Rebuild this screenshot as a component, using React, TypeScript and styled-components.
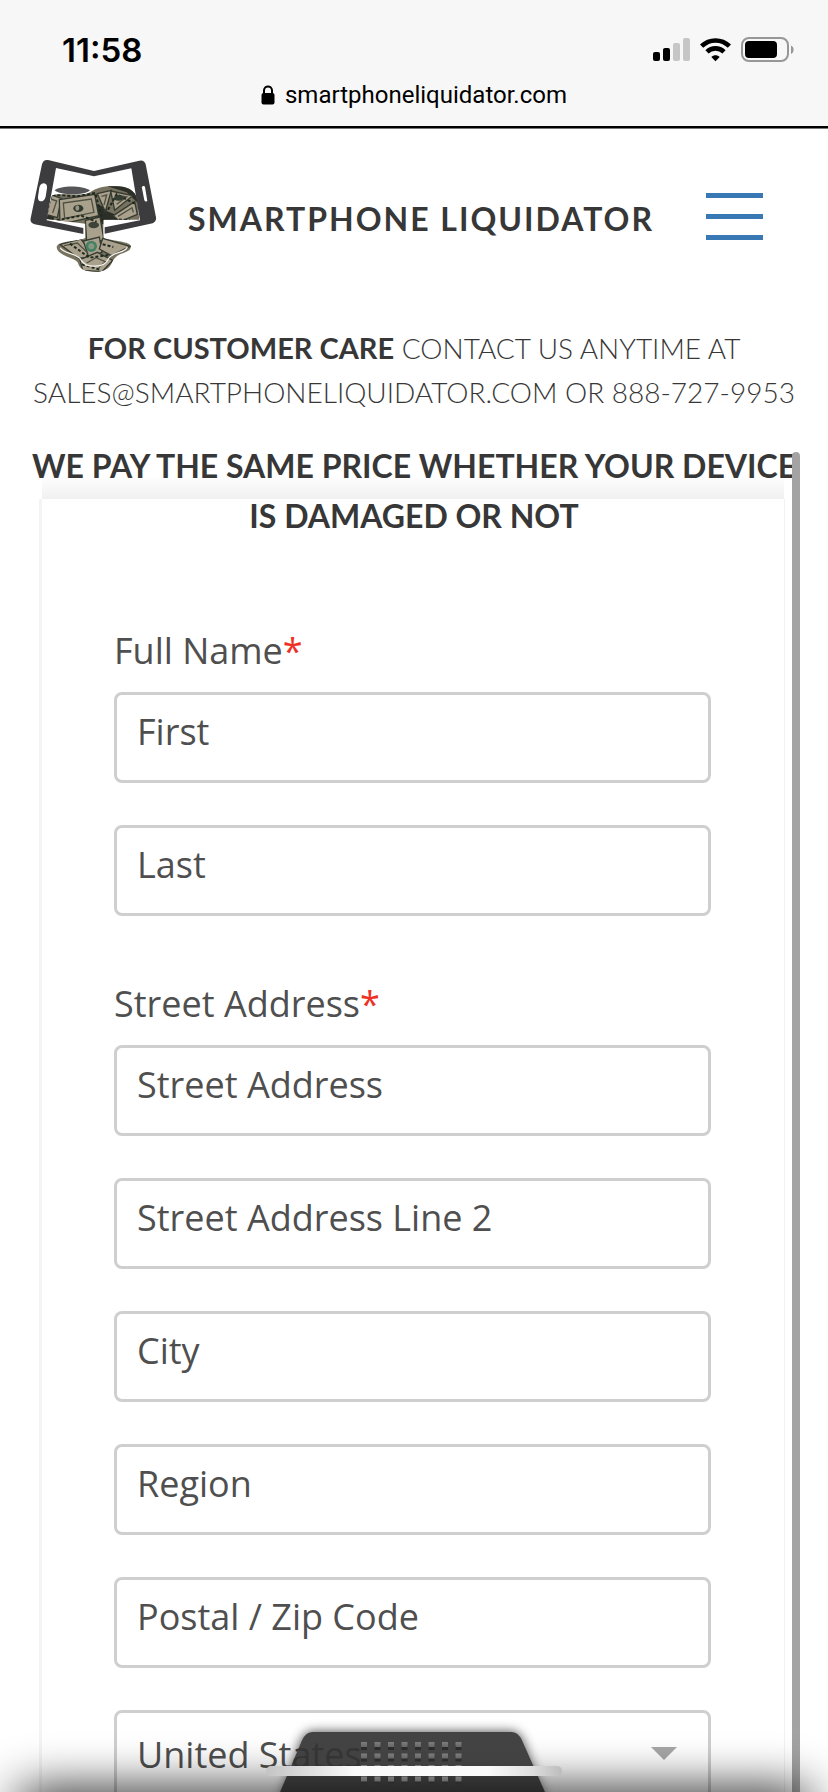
import React from "react";
import styled, { createGlobalStyle } from "styled-components";

const GlobalStyle = createGlobalStyle`
  *, *::before, *::after { box-sizing: border-box; }
  body { margin: 0; background: #fff; }
`;

const Screen = styled.div`
  display: flex;
  flex-direction: column;
  height: 100vh;
  overflow: hidden;
  color: #373737;
  font-family: Lato, "Liberation Sans", sans-serif;
`;

const BrowserBar = styled.div`
  flex: none;
  display: flex;
  flex-direction: column;
  height: 128px;
  padding-top: 28px;
  background: #f7f7f7;
  border-bottom: 2px solid #000;
  box-shadow: 0 1px 0 #777;
  color: #000;
  font-family: Inter, "Liberation Sans", sans-serif;
`;

const StatusRow = styled.div`
  display: flex;
  align-items: center;
  justify-content: space-between;
  height: 44px;
  padding: 0 33px 0 62px;
`;

const Clock = styled.time`
  font-size: 33px;
  line-height: 44px;
  font-weight: 600;
`;

const StatusIcons = styled.div`
  display: flex;
  align-items: center;
  gap: 10px;
`;

const AddressRow = styled.div`
  display: flex;
  align-items: center;
  justify-content: center;
  gap: 10px;
  height: 46px;
  font-size: 24px;
  line-height: 46px;
  font-family: Roboto, "Liberation Sans", sans-serif;
`;

const SiteHeader = styled.header`
  flex: none;
  display: flex;
  align-items: center;
  height: 176px;
  padding: 0 65px 0 30px;
`;

const Brand = styled.a`
  flex: 1;
  display: flex;
  align-items: flex-start;
  gap: 30px;
  color: inherit;
  text-decoration: none;
`;

const BrandName = styled.span`
  padding-top: 38px;
  font-size: 32px;
  line-height: 44px;
  font-weight: 700;
  letter-spacing: 2px;
  white-space: nowrap;
`;

const MenuButton = styled.button`
  display: flex;
  flex-direction: column;
  gap: 16px;
  width: 57px;
  padding: 0;
  border: 0;
  background: none;
`;

const MenuBar = styled.span`
  height: 5px;
  background: #3878b4;
`;

const CareNote = styled.p`
  flex: none;
  margin: 22px 0 0;
  font-size: 28px;
  line-height: 44px;
  font-weight: 300;
  text-align: center;
  white-space: nowrap;

  strong { font-size: 29px; font-weight: 700; }
`;

const ScrollPane = styled.main`
  position: relative;
  flex: 1;
  min-height: 0;
  margin-top: 38px;
`;

const Headline = styled.h1`
  position: relative;
  z-index: 1;
  margin: -11px 0 0;
  font-size: 32px;
  line-height: 50px;
  font-weight: 700;
  text-align: center;
  white-space: nowrap;
`;

const ScrollThumb = styled.div`
  position: absolute;
  z-index: 2;
  top: 0;
  right: 28px;
  bottom: 0;
  width: 8px;
  border-radius: 4px 4px 0 0;
  background: #a3a3a3;
`;

const FormCard = styled.form`
  position: relative;
  margin: -42px 43px 0 39px;
  padding: 127px 73px 0 72px;
  border-left: 3px solid #f4f4f4;
  border-right: 1px solid #f2f2f2;
  color: #4f4f4f;
  font-family: "Open Sans", "Liberation Sans", sans-serif;

  &::before {
    content: "";
    position: absolute;
    left: 0;
    right: 0;
    top: -24px;
    height: 24px;
    background: linear-gradient(rgba(0, 0, 0, 0), rgba(0, 0, 0, 0.06));
  }
`;

const FieldGroup = styled.div`
  display: flex;
  flex-direction: column;
  gap: 42px;
  margin-bottom: 63px;
`;

const LabelledField = styled.div`
  display: flex;
  flex-direction: column;
  gap: 16px;
`;

const FieldLabel = styled.label`
  font-size: 36px;
  line-height: 50px;
`;

const Required = styled.span`
  color: #ee3124;
`;

const TextField = styled.input`
  display: block;
  width: 100%;
  height: 91px;
  padding: 0 20px 12px;
  border: 3px solid #cfcfcf;
  border-radius: 8px;
  outline: 0;
  background: #fff;
  color: inherit;
  font: inherit;
  font-size: 36px;

  &::placeholder { color: inherit; opacity: 1; }
`;

const CountrySelect = styled(TextField).attrs({ as: "select" })`
  padding: 0 20px 2px;
  appearance: none;
`;

const SelectWrap = styled.div`
  position: relative;
`;

const SelectArrow = styled.svg`
  position: absolute;
  top: 37px;
  right: 34px;
  pointer-events: none;
`;

const BottomShade = styled.div`
  position: fixed;
  z-index: 3;
  left: 20px;
  right: 20px;
  bottom: -40px;
  height: 40px;
  box-shadow: 0 0 50px #000;
`;

const DrawerTab = styled.button`
  position: fixed;
  z-index: 4;
  bottom: 0;
  left: 50%;
  margin-left: -162px;
  padding: 0;
  border: 0;
  background: none;

  svg { display: block; }
`;

const HomeIndicator = styled.div`
  position: fixed;
  z-index: 5;
  bottom: 16px;
  left: 50%;
  width: 296px;
  height: 10px;
  margin-left: -148px;
  border-radius: 5px;
  background: linear-gradient(90deg, #c4c4c4, #fafafa 30%, #fafafa 75%, #dedede 90%, #bcbcbc);
`;

function StatusGlyphs() {
  return (
    <StatusIcons>
      <svg width="37" height="24" viewBox="0 0 37 24" aria-label="Signal">
        <rect x="0" y="14" width="7" height="9" rx="2" />
        <rect x="10" y="10" width="7" height="13" rx="2" />
        <rect x="20" y="5" width="7" height="18" rx="2" fill="#c6c6c6" />
        <rect x="30" y="0" width="7" height="23" rx="2" fill="#c6c6c6" />
      </svg>
      <svg width="31" height="24" viewBox="0 0 31 24" aria-label="Wi-Fi">
        <g fill="none" stroke="#000" strokeWidth="4.6">
          <path d="M1.6 8.2C9.4 .5 21.6 .5 29.4 8.2" />
          <path d="M7 13.8C11.8 9.2 19.2 9.2 24 13.8" />
        </g>
        <path d="M11.3 19C13.7 16.7 17.3 16.7 19.7 19L15.5 23.2Z" />
      </svg>
      <svg width="54" height="26" viewBox="0 0 54 26" aria-label="Battery">
        <rect x="1" y="1" width="46" height="23" rx="7" fill="none" stroke="#979797" strokeWidth="2" />
        <rect x="4" y="4" width="32" height="17" rx="4" />
        <path d="M50 8.5C53.5 10 53.5 15.500 50 17Z" fill="#979797" />
      </svg>
    </StatusIcons>
  );
}

function Logo() {
  return (
    <svg width="128" height="115" viewBox="30 38 384 345" aria-hidden="true">
      <defs>
        <clipPath id="pile">
          <path d="M96 148C110 138 190 152 210 138C226 126 250 118 285 119C318 119 346 130 352 160L358 220H250V274C282 286 332 284 333 300C332 322 296 318 284 336C272 350 274 372 236 376C192 378 178 366 174 350C168 334 112 330 110 302C112 282 180 286 196 274V232L80 218Z" />
        </clipPath>
      </defs>
      <g clipPath="url(#pile)">
        <rect x="70" y="110" width="290" height="275" fill="#77725f" />
        <path d="M70 130L112 160L100 226H70ZM222 170L262 186L250 232H226ZM262 120L360 120V176L320 138ZM250 190L290 206L272 234H244Z" fill="#2b2f28" />
        <g stroke="#353b31" strokeWidth="4" fill="#aaa18d">
          <path d="M96 146L124 156L112 214L78 204Z" />
          <path d="M118 160L224 144L236 208L120 234Z" />
          <path d="M232 142L274 132L256 196Z" />
          <path d="M272 134L338 148L284 192Z" />
          <path d="M280 208L344 166L352 204L300 226Z" />
          <path d="M196 222L240 212L252 282L200 286Z" />
          <path d="M120 294L182 278L226 330L176 336Z" />
          <path d="M190 284L238 272L246 318L206 332Z" />
          <path d="M248 276L330 300L274 328L238 308Z" />
          <path d="M180 340L232 318L278 342L246 376L188 372Z" />
        </g>
        <g fill="none" stroke="#4f5144" strokeWidth="4">
          <path d="M130 170L214 158L222 198L134 216ZM92 158L110 164L98 200M244 150L260 146L252 176M286 146L320 152L290 174M294 210L336 184L340 198M132 298L172 290L204 320M200 350L228 334L256 346L236 364" />
        </g>
        <g fill="none" stroke="#20291f" strokeWidth="6" strokeDasharray="9 6">
          <path d="M82 144L170 150L226 140L248 224M110 222L184 208L230 226M264 190L290 144L348 174M282 218L330 222M150 292L208 334L268 326M248 294L280 302M186 354L240 370" />
        </g>
        <ellipse cx="175" cy="186" rx="15" ry="11" fill="#2f3a30" />
        <ellipse cx="172" cy="185" rx="6" ry="8" fill="#969380" />
        <ellipse cx="296" cy="155" rx="14" ry="8" fill="#333d31" />
        <ellipse cx="221" cy="236" rx="16" ry="10" fill="#3c4439" />
        <circle cx="214" cy="300" r="17" fill="#438064" />
        <circle cx="214" cy="300" r="9" fill="#87977f" />
        <path d="M121 304C127 322 174 320 184 342C198 366 254 366 265 338C275 316 316 322 322 302" fill="none" stroke="#f2f0e9" strokeWidth="4" />
      </g>
      <path d="M104 132C124 116 188 118 210 132C196 148 120 148 104 132Z" fill="#565659" />
      <path fillRule="evenodd" fill="#3c3c3e" d="M84 41L222 74L358 43Q373 40 377 54L407 208Q412 224 398 231L254 262V243L360 222L334 66L222 90L108 65L80 222L190 245V263L44 234Q29 230 32 216L66 54Q70 39 84 41ZM70 111Q61 112 58 124L54 151Q53 164 62 165Q73 165 77 151L81 125Q82 111 70 111ZM370 119Q364 120 366 126L373 162Q376 168 382 164L375 122Q374 118 370 119Z" />
    </svg>
  );
}

const dotColumns = [0, 1, 2, 3, 4, 5, 6, 7];
const dotRows = [0, 1, 2, 3];

function DrawerShape() {
  return (
    <svg width="320" height="90" viewBox="0 0 320 90" aria-hidden="true">
      <defs>
        <filter id="tabShadow" x="-20%" y="-50%" width="140%" height="200%">
          <feGaussianBlur stdDeviation="6" />
        </filter>
        <clipPath id="outsideTab">
          <path clipRule="evenodd" d="M0 0H320V90H0ZM28 90L50 38Q54 30 60 30H260Q266 30 270 38L293 90Z" />
        </clipPath>
        <linearGradient id="tabFill" x2="0" y2="1">
          <stop offset="0.5" stopColor="#333" stopOpacity="0.92" />
          <stop offset="1" stopColor="#202020" stopOpacity="0.92" />
        </linearGradient>
        <linearGradient id="dotFill" x2="0" y2="1">
          <stop stopColor="#7d7d7d" />
          <stop offset="1" stopColor="#666" />
        </linearGradient>
      </defs>
      <g clipPath="url(#outsideTab)">
        <path d="M28 100L50 38Q54 30 60 30H260Q266 30 270 38L293 100Z" fill="#000" opacity="0.75" filter="url(#tabShadow)" />
      </g>
      <path d="M28 90L50 38Q54 30 60 30H260Q266 30 270 38L293 90Z" fill="url(#tabFill)" />
      {dotRows.map((row) =>
        dotColumns.map((col) => (
          <g key={`${row}-${col}`} transform={`translate(${109 + col * 13.5} ${40 + row * 11.5})`}>
            <rect y="3" width="6" height="5" fill="#2c2c2c" />
            <rect width="6" height="5" fill="url(#dotFill)" />
          </g>
        ))
      )}
    </svg>
  );
}

const addressLines = ["Street Address Line 2", "City", "Region", "Postal / Zip Code"];

export default function App() {
  return (
    <Screen>
      <GlobalStyle />
      <BrowserBar>
        <StatusRow>
          <Clock>11:58</Clock>
          <StatusGlyphs />
        </StatusRow>
        <AddressRow>
          <svg width="14" height="20" viewBox="0 0 14 20" aria-hidden="true">
            <path d="M3 9V5.500C3 0 11 0 11 5.500V9" fill="none" stroke="#000" strokeWidth="2" />
            <rect x="0.500" y="8" width="13" height="11.500" rx="2" />
          </svg>
          <span>smartphoneliquidator.com</span>
        </AddressRow>
      </BrowserBar>
      <SiteHeader>
        <Brand href="#">
          <Logo />
          <BrandName>SMARTPHONE LIQUIDATOR</BrandName>
        </Brand>
        <MenuButton type="button" aria-label="Menu">
          <MenuBar />
          <MenuBar />
          <MenuBar />
        </MenuButton>
      </SiteHeader>
      <CareNote>
        <strong>FOR CUSTOMER CARE</strong> CONTACT US ANYTIME AT
        <br />
        SALES@SMARTPHONELIQUIDATOR.COM OR 888-727-9953
      </CareNote>
      <ScrollPane>
        <Headline>
          WE PAY THE SAME PRICE WHETHER YOUR DEVICE
          <br />
          IS DAMAGED OR NOT
        </Headline>
        <ScrollThumb />
        <FormCard>
          <FieldGroup>
            <LabelledField>
              <FieldLabel htmlFor="first">
                Full Name<Required>*</Required>
              </FieldLabel>
              <TextField id="first" type="text" placeholder="First" />
            </LabelledField>
            <TextField type="text" aria-label="Last name" placeholder="Last" />
          </FieldGroup>
          <FieldGroup>
            <LabelledField>
              <FieldLabel htmlFor="street">
                Street Address<Required>*</Required>
              </FieldLabel>
              <TextField id="street" type="text" placeholder="Street Address" />
            </LabelledField>
            {addressLines.map((line) => (
              <TextField key={line} type="text" aria-label={line} placeholder={line} />
            ))}
            <SelectWrap>
              <CountrySelect aria-label="Country">
                <option>United States</option>
              </CountrySelect>
              <SelectArrow width="26" height="13" viewBox="0 0 26 13" aria-hidden="true">
                <path d="M0 0H26L13 13Z" fill="#a8a8a8" />
              </SelectArrow>
            </SelectWrap>
          </FieldGroup>
        </FormCard>
      </ScrollPane>
      <BottomShade />
      <DrawerTab type="button" aria-label="Open drawer">
        <DrawerShape />
      </DrawerTab>
      <HomeIndicator />
    </Screen>
  );
}
